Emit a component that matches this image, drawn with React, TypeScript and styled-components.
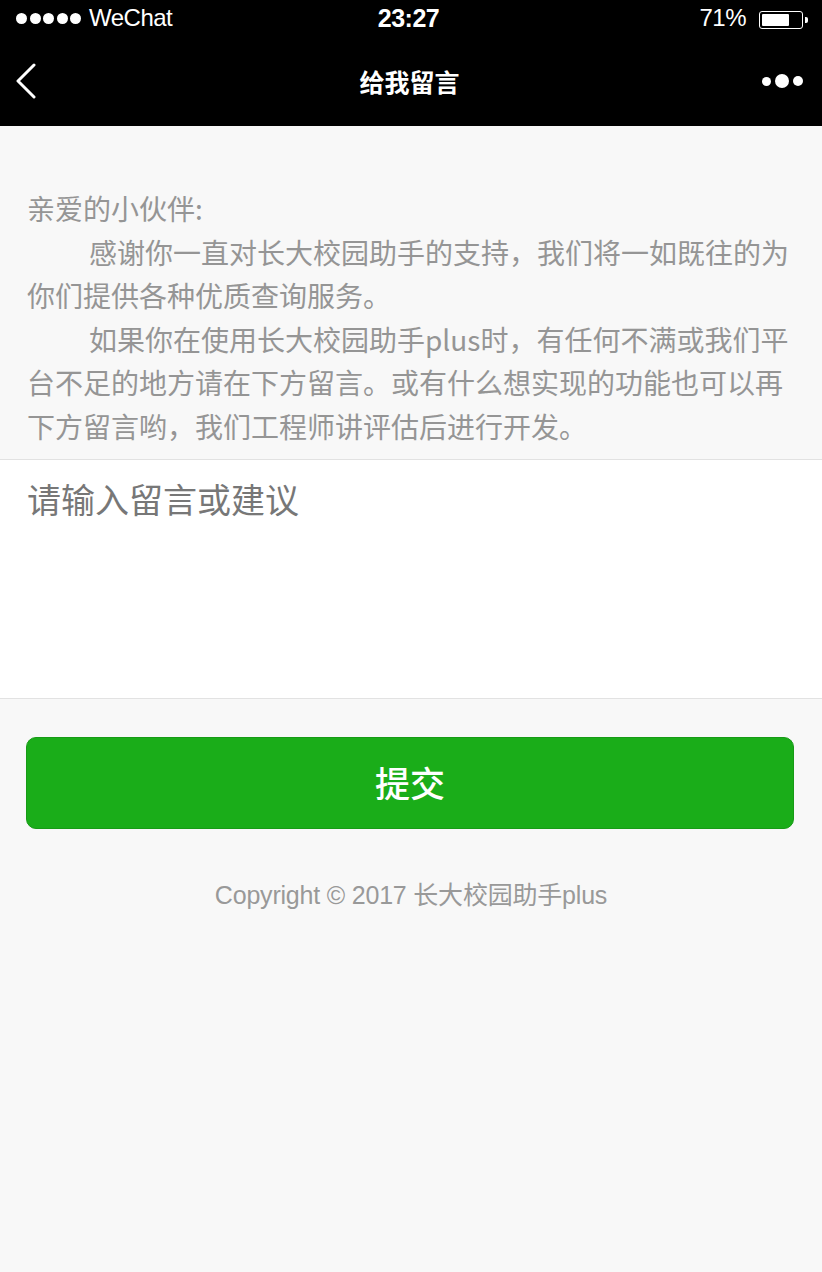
import React from "react";
import styled, { createGlobalStyle } from "styled-components";

const GlobalStyle = createGlobalStyle`
  html, body { margin: 0; padding: 0; background: #f8f8f8; }
  body { font-family: "Liberation Sans", "Noto Sans CJK SC", sans-serif; }
  * { box-sizing: border-box; }
`;

const Page = styled.div`
  width: 822px;
  min-height: 1272px;
  background: #f8f8f8;
  display: flex;
  flex-direction: column;
`;

const StatusBar = styled.div`
  height: 40px;
  background: #000;
  color: #fff;
  display: grid;
  grid-template-columns: 1fr auto 1fr;
  align-items: center;
  padding: 0 13px 4px 16px;
  font-family: "Liberation Sans", "Noto Sans CJK SC", sans-serif;
  font-size: 24px;
  letter-spacing: -0.5px;
`;

const StatusLeft = styled.div`
  display: flex;
  align-items: center;
  gap: 8px;
`;

const Signal = styled.div`
  display: flex;
  gap: 2.5px;
`;

const Dot = styled.span<{ $size: number }>`
  width: ${(p) => p.$size}px;
  height: ${(p) => p.$size}px;
  border-radius: 50%;
  background: #fff;
  display: block;
`;

const Time = styled.div`
  font-weight: 700;
  font-size: 25px;
  padding-right: 8px;
`;

const StatusRight = styled.div`
  display: flex;
  align-items: center;
  justify-content: flex-end;
  gap: 13px;
`;

const Battery = styled.div`
  position: relative;
  width: 44px;
  height: 18px;
  border: 1.5px solid #fff;
  border-radius: 3px;
  padding: 2px;
  margin-right: 6px;
  margin-top: 4px;
  &::after {
    content: "";
    position: absolute;
    right: -6px;
    top: 4.5px;
    width: 3px;
    height: 6px;
    background: #fff;
    border-radius: 0 2px 2px 0;
  }
`;

const BatteryFill = styled.div`
  height: 100%;
  background: #fff;
  border-radius: 1px;
`;

const NavBar = styled.div`
  height: 86px;
  background: #000;
  color: #fff;
  display: grid;
  grid-template-columns: 80px 1fr 80px;
  align-items: center;
  padding: 0 19px 4px 16px;
`;

const Title = styled.div`
  text-align: center;
  font-family: "Noto Sans CJK SC", sans-serif;
  font-weight: 700;
  font-size: 25px;
`;

const More = styled.div`
  display: flex;
  align-items: center;
  justify-content: flex-end;
  gap: 4px;
`;

const Intro = styled.div`
  padding: 61px 27px 10px 27px;
  font-family: "Noto Sans CJK SC", sans-serif;
  font-size: 28px;
  line-height: 43.6px;
  color: #959595;
  border-bottom: 1px solid #e2e2e2;
`;

const Para = styled.p<{ $indent?: boolean }>`
  margin: 0;
  text-indent: ${(p) => (p.$indent ? "62px" : "0")};
`;

const TextArea = styled.textarea`
  display: block;
  width: 100%;
  height: 239px;
  background: #fff;
  border: none;
  border-bottom: 1px solid #e2e2e2;
  resize: none;
  outline: none;
  padding: 16px 27px;
  font-family: "Noto Sans CJK SC", sans-serif;
  font-size: 34px;
  line-height: 46px;
  color: #333;
  &::placeholder {
    color: #777;
  }
`;

const Actions = styled.div`
  padding: 38px 28px 0 26px;
`;

const SubmitButton = styled.button`
  display: block;
  width: 100%;
  height: 92px;
  background: #1aad19;
  border: 1px solid #179b16;
  border-radius: 10px;
  color: #fff;
  font-family: "Noto Sans CJK SC", sans-serif;
  font-size: 35px;
  font-weight: 500;
  padding-bottom: 4px;
  cursor: pointer;
`;

const Footer = styled.div`
  margin-top: 46px;
  text-align: center;
  font-family: "Liberation Sans", "Noto Sans CJK SC", sans-serif;
  font-size: 25px;
  letter-spacing: -0.2px;
  color: #999;
`;

export default function App() {
  return (
    <>
      <GlobalStyle />
      <Page>
        <StatusBar>
          <StatusLeft>
            <Signal>
              {[0, 1, 2, 3, 4].map((i) => (
                <Dot key={i} $size={11} />
              ))}
            </Signal>
            <span>WeChat</span>
          </StatusLeft>
          <Time>23:27</Time>
          <StatusRight>
            <span>71%</span>
            <Battery>
              <BatteryFill style={{ width: "71%" }} />
            </Battery>
          </StatusRight>
        </StatusBar>
        <NavBar>
          <svg width="22" height="36" viewBox="0 0 22 36">
            <polyline
              points="18,2 2,18 18,34"
              fill="none"
              stroke="#fff"
              strokeWidth="3"
              strokeLinecap="round"
              strokeLinejoin="round"
            />
          </svg>
          <Title>给我留言</Title>
          <More>
            <Dot $size={9} />
            <Dot $size={14} />
            <Dot $size={10} />
          </More>
        </NavBar>
        <Intro>
          <Para>亲爱的小伙伴:</Para>
          <Para $indent>
            感谢你一直对长大校园助手的支持，我们将一如既往的为你们提供各种优质查询服务。
          </Para>
          <Para $indent>
            如果你在使用长大校园助手plus时，有任何不满或我们平台不足的地方请在下方留言。或有什么想实现的功能也可以再下方留言哟，我们工程师讲评估后进行开发。
          </Para>
        </Intro>
        <TextArea placeholder="请输入留言或建议" />
        <Actions>
          <SubmitButton>提交</SubmitButton>
        </Actions>
        <Footer>Copyright © 2017 长大校园助手plus</Footer>
      </Page>
    </>
  );
}
